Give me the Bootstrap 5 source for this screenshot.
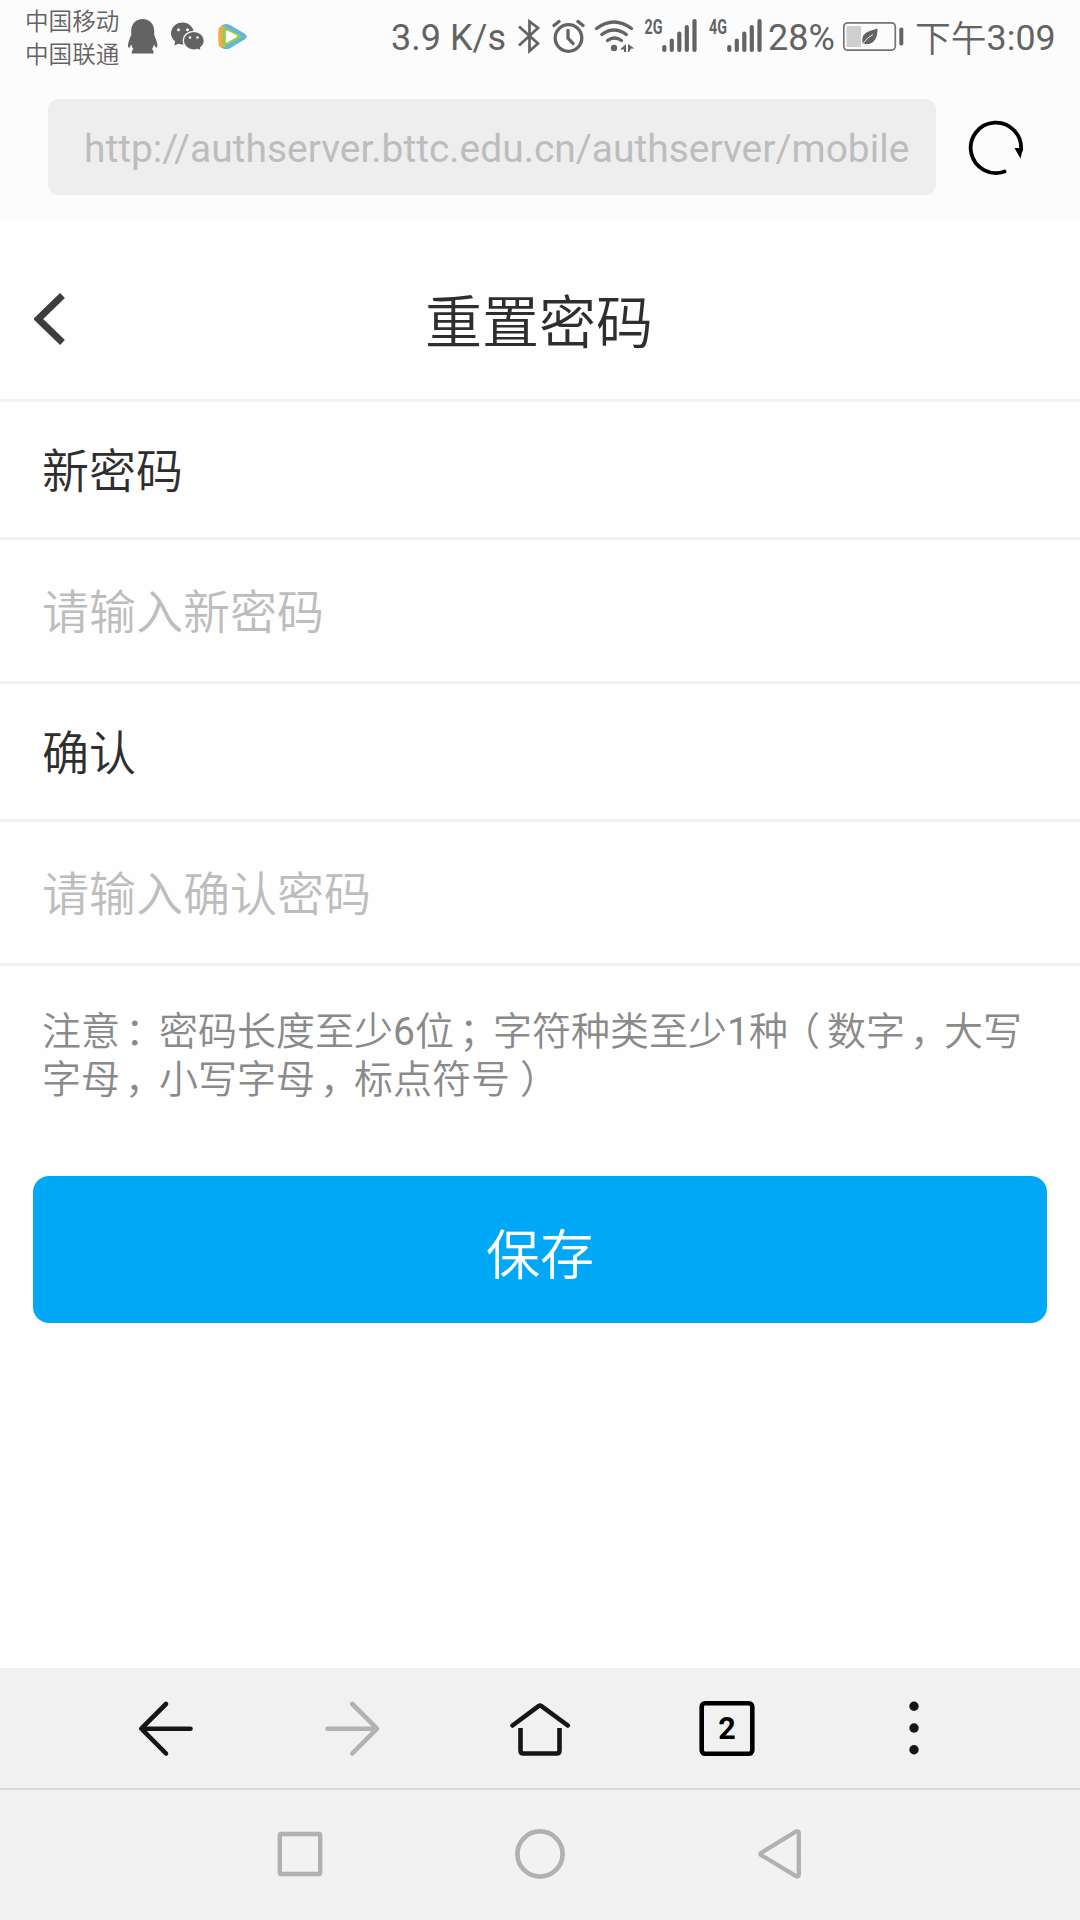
<!DOCTYPE html>
<html lang="zh-CN">
<head>
<meta charset="utf-8">
<meta name="viewport" content="width=device-width, initial-scale=1">
<title>重置密码</title>
<link href="https://cdn.jsdelivr.net/npm/bootstrap@5.3.0/dist/css/bootstrap.min.css" rel="stylesheet">
<style>
body{font-family:Roboto,"Noto Sans CJK SC",sans-serif;color:#333;background:#fefefe;line-height:1}
svg{display:block;flex:none}
.cjk{font-family:"Noto Sans CJK SC DemiLight","Noto Sans CJK SC",sans-serif;font-weight:350}
.screen{height:1920px;width:1080px}
.chrome-top{background:#fcfcfc}
.status{height:72px;padding:0 25px;color:#636363;font-size:36px}
.status .txt{line-height:76px;white-space:nowrap}
.carriers{font-size:23.6px;line-height:33px;padding-top:4px;width:95px;white-space:nowrap}
.carriers div{height:33px}
.ic-qq{margin-left:8px}.ic-wx{margin-left:13px}.ic-tv{margin-left:13px}
.ic-bt{margin-left:12px}.ic-al{margin-left:12px}.ic-wf{margin-left:9px}
.ic-sig{margin-left:9px}.ic-sig2{margin-left:10px}.pct{margin-left:5px;width:67px}
.ic-bat{margin-left:8px}.clock{margin-left:10px;width:140px;font-size:35.8px}
.clock span{display:inline-block;line-height:1;padding-top:3px;margin-bottom:-3px;vertical-align:-2px}
.gen{font:bold 20px Roboto,sans-serif;fill:#636363}
.addr{height:148px;padding:27px 50px 25px 48px}
.addr .form-control{width:888px;height:96px;padding:0 20px 0 36px;border:0;border-radius:11px;background:#eee;color:#bdbdbd;font-size:38.95px;line-height:100px;white-space:nowrap;overflow:hidden}
.page-head{height:182px;padding-top:18px;border-bottom:3px solid #f1f1f1}
.page-head h1{font-size:57px;line-height:1;color:#2e2e2e;padding-right:2px}
.page-head .side{width:96px;padding-left:34px}
.rowline{border:0;border-bottom:3px solid #f1f1f1;border-radius:0;padding:0 42px;font-size:47px;background:transparent;color:#2e2e2e;white-space:nowrap}
.lbl{height:138px;padding-bottom:5px}
.fld{height:144px;padding-bottom:3px;color:#c2c2c2}
.fld input{font-size:47px;padding:0;border:0;background:transparent;line-height:70px;color:#2e2e2e}
.fld input::placeholder{color:#bdbdbd;opacity:1}
.note{font-size:39px;line-height:48px;color:#8a8a8a;padding:38px 42px 0;height:210px;white-space:nowrap}
.note i{font-style:normal;font-feature-settings:"halt";margin-left:5px;margin-right:14.500px}
.note i.po{margin-left:12.500px;margin-right:7px}
.note i.pc{margin-left:10px;margin-right:0}
.num{font-family:Roboto,sans-serif;font-weight:400;line-height:0}
.btn-save{margin:0 33px;height:147px;padding:5px 0 0;border:0;border-radius:16px;background:#00a8f5;color:#fff;font-size:54px;line-height:1}
.btn-save:hover{background:#00a8f5;color:#fff}
.tools{height:122px;padding:1px 72.500px 0;background:#f1f1f1;border-bottom:2px solid #d9d9d9}
.tools>div,.sysnav>div{flex:1 1 0;display:flex;justify-content:center;align-items:center}
.sysnav{height:130px;background:#f2f2f2;padding:0 180px}
.tabcount{font:bold 30.500px Roboto,sans-serif}
</style>
</head>
<body>
<div class="screen d-flex flex-column overflow-hidden">
<header class="chrome-top">
  <div class="status d-flex align-items-start">
    <div class="carriers cjk"><div>中国移动</div><div>中国联通</div></div>
    <svg class="ic-qq" width="30" height="72" viewBox="128 0 30 72" fill="#636363"><path d="M142.700 19c-7 0-11.500 5-11.500 12v4c-1.700 4-3.200 7.500-3.200 11 0 1.500.6 2 1.400 1.400.7-.5 1.400-1.600 2-2.800.4 1.700 1 3.300 2 4.700-1.100.7-1.700 1.800-1.700 4.200h22c0-2.400-.6-3.500-1.700-4.200 1-1.400 1.600-3 2-4.700.6 1.200 1.300 2.300 2 2.800.8.6 1.400.1 1.400-1.400 0-3.500-1.500-7-3.200-11v-4c0-7-4.500-12-11.500-12z"/></svg>
    <svg class="ic-wx" width="34" height="72" viewBox="171 0 34 72"><path d="M182.500 22.500c6.300 0 11.500 4.900 11.500 11s-5.200 11-11.500 11c-1.500 0-2.800-.2-4.100-.7l-4 1.700.8-4C172.700 39.500 171 36.700 171 33.500c0-6.100 5.200-11 11.500-11z" fill="#636363"/><path d="M193.800 31.300c5.700 0 10.500 4 10.500 9.300 0 3-1.500 5.500-3.700 7.200l.5 3.200-3.300-1.600c-1.200.4-2.600.6-4 .6-5.800 0-10.500-4.200-10.500-9.400s4.700-9.300 10.500-9.300z" fill="#636363" stroke="#fcfcfc" stroke-width="1.200"/><g fill="#fcfcfc"><circle cx="178.500" cy="29.800" r="1.500"/><circle cx="187.500" cy="29.800" r="1.500"/><circle cx="190" cy="37.500" r="1.300"/><circle cx="197.500" cy="37.500" r="1.300"/></g></svg>
    <svg class="ic-tv" width="30" height="72" viewBox="218 0 30 72"><path d="M221 26q4-3.500 9-1l14.500 8.500q4.500 3 0 6L230 48.300q-4.500 2.300-9-.8z" fill="#62b5dc"/><path d="M218.500 30q0-4 4-4l3.500.7v20l-3.500.8q-4 0-4-4-.7-6.500 0-13.500z" fill="#f6ab3e"/><path d="M222.500 29q1-2.500 4-1l14 7q2.500 1.500 0 3l-14 7.500q-3 1-4-1.500-1-7.500 0-15z" fill="#8fce55"/><path d="M225.800 32q0-2.200 2-1.200l8.500 4.300q1.800 1.100 0 2.200l-8.500 5q-2 1-2-1z" fill="#fff"/></svg>
    <div class="txt ms-auto">3.9 K/s</div>
    <svg class="ic-bt" width="22" height="72" viewBox="519 0 22 72" fill="none" stroke="#636363" stroke-width="2.700"><path d="M520 26.500l19 17-8.500 7.500V21.500l8.500 6.500-19 17.500"/></svg>
    <svg class="ic-al" width="33" height="72" viewBox="552 0 33 72" fill="none" stroke="#636363" stroke-width="3.300" stroke-linecap="round"><circle cx="568.500" cy="38" r="13.300"/><path d="M568 30.500v7.500l5 5.500M554 25.500l5-4M583 25.500l-5-4"/></svg>
    <svg class="ic-wf" width="41" height="72" viewBox="594 0 41 72" fill="none" stroke="#636363" stroke-width="3.300" stroke-linecap="round"><path d="M596.500 28.500q17.500-13 35 0M601.800 34.500q12.300-9 24.500 0M607.500 40.500q7-5 14 0"/><circle cx="614" cy="48" r="3.200" fill="#636363" stroke="none"/><path d="M626 44v8h-2v-2.500h-4zM628 44l6.500 4.500h-3.500l-2 3.500h-1z" fill="#636363" stroke="none"/></svg>
    <svg class="ic-sig" width="54" height="72" viewBox="644 0 54 72"><text class="gen" x="644.500" y="34" textLength="18" lengthAdjust="spacingAndGlyphs">2G</text><path d="M664.300 47v3M671.800 40.500V50M679.300 33.500V50M686.800 27V50M694.500 21V50" stroke="#636363" stroke-width="4.200" stroke-linecap="round"/></svg>
    <svg class="ic-sig2" width="55" height="72" viewBox="708 0 55 72"><text class="gen" x="709" y="34" textLength="18" lengthAdjust="spacingAndGlyphs">4G</text><path d="M729.300 47v3M736.800 40.500V50M744.300 33.500V50M751.800 27V50M759.500 21V50" stroke="#636363" stroke-width="4.200" stroke-linecap="round"/></svg>
    <div class="txt pct">28%</div>
    <svg class="ic-bat" width="62" height="72" viewBox="844 0 62 72"><rect x="844.800" y="22.800" width="51.500" height="27.400" rx="4" fill="none" stroke="#737373" stroke-width="1.700"/><path d="M847.500 26H862v21h-14.500z" fill="#cfcfcf"/><path d="M863.500 44q-2-10 7-13l8-2.500q0 14-9 15.500-3 .5-4.500-.5z" fill="#636363"/><path d="M863.500 44q5-7 10.500-9.500" stroke="#fcfcfc" fill="none" stroke-width=".9"/><path d="M902.300 29.500v14" stroke="#636363" stroke-width="4" stroke-linecap="round"/></svg>
    <div class="txt clock"><span class="cjk">下午</span>3:09</div>
  </div>
  <div class="addr d-flex justify-content-between align-items-start">
    <div class="form-control">http://authserver.bttc.edu.cn/authserver/mobile</div>
    <svg width="62" height="96" viewBox="968 99 62 96"><path d="M1004.500 171.500A25.200 25.200 0 1 1 1021 150" fill="none" stroke="#000" stroke-width="3.800" stroke-linecap="round"/><path d="M1014.500 148h8.500l-2.500 10.500z"/></svg>
  </div>
</header>
<main class="flex-grow-1 d-flex flex-column">
  <div class="page-head d-flex align-items-center">
    <div class="side"><svg width="32" height="53" viewBox="34 293 32 53"><path d="M62.500 296.500L38.200 320l24.300 23.500" fill="none" stroke="#3c3d3f" stroke-width="7"/></svg></div>
    <h1 class="cjk flex-grow-1 text-center m-0">重置密码</h1>
    <div class="side"></div>
  </div>
  <label class="cjk rowline lbl d-flex align-items-center" for="pw1">新密码</label>
  <div class="rowline fld d-flex align-items-center"><input class="cjk w-100" id="pw1" placeholder="请输入新密码"></div>
  <label class="cjk rowline lbl d-flex align-items-center" for="pw2">确认</label>
  <div class="rowline fld d-flex align-items-center"><input class="cjk w-100" id="pw2" placeholder="请输入确认密码"></div>
  <div class="note cjk">注意<i>：</i>密码长度至少<span class="num">6</span>位<i>；</i>字符种类至少<span class="num">1</span>种<i class="po">（</i>数字<i>，</i>大写<br>字母<i>，</i>小写字母<i>，</i>标点符号<i class="pc">）</i></div>
  <button type="button" class="cjk btn btn-primary btn-save">保存</button>
</main>
<nav class="tools d-flex">
  <div><svg width="60" height="60" viewBox="137 1699 60 60" fill="none" stroke="#161616" stroke-width="4.600" stroke-linecap="round" stroke-linejoin="round"><path d="M191.500 1728.700H142.500M167 1704l-24.700 24.700L167 1753.500"/></svg></div>
  <div><svg width="60" height="60" viewBox="323 1699 60 60" fill="none" stroke="#b2b2b2" stroke-width="4.600" stroke-linecap="round" stroke-linejoin="round"><path d="M327.500 1728.700h49M352.300 1704l24.700 24.700-24.700 24.800"/></svg></div>
  <div><svg width="62" height="60" viewBox="509 1699 62 60" fill="none" stroke="#161616" stroke-width="4.600"><path d="M512.500 1725.500l26-19.300q1.500-1 3 0l26.300 19.300" stroke-linecap="round"/><path d="M520.500 1728v22.500q0 3 3 3h33q3 0 3-3V1728"/></svg></div>
  <div><svg width="60" height="60" viewBox="697.500 1699 60 60"><rect x="702.200" y="1703.200" width="50.600" height="50.600" rx="3.500" fill="none" stroke="#000" stroke-width="4.600"/><text class="tabcount" x="727.500" y="1739" text-anchor="middle">2</text></svg></div>
  <div><svg width="60" height="60" viewBox="884 1699 60 60" fill="#161616"><circle cx="914" cy="1706.200" r="4.700"/><circle cx="914" cy="1728" r="4.700"/><circle cx="914" cy="1749.700" r="4.700"/></svg></div>
</nav>
<footer class="sysnav d-flex">
  <div><svg width="60" height="60" viewBox="270 1825 60 60"><rect x="279.800" y="1834" width="40.400" height="40" rx="1.500" fill="none" stroke="#b1b1b1" stroke-width="4.400"/></svg></div>
  <div><svg width="60" height="60" viewBox="510 1825 60 60"><circle cx="540" cy="1854" r="22.600" fill="none" stroke="#b1b1b1" stroke-width="4.600"/></svg></div>
  <div><svg width="60" height="60" viewBox="750 1825 60 60"><path d="M761 1853l35-21.500q2.800-.8 2.800 1.500v41.500q0 2.500-2.800 1.700L761 1855q-1-1 0-2z" fill="none" stroke="#b1b1b1" stroke-width="4.300" stroke-linejoin="round"/></svg></div>
</footer>
</div>
<script src="https://cdn.jsdelivr.net/npm/bootstrap@5.3.0/dist/js/bootstrap.bundle.min.js"></script>
</body>
</html>
